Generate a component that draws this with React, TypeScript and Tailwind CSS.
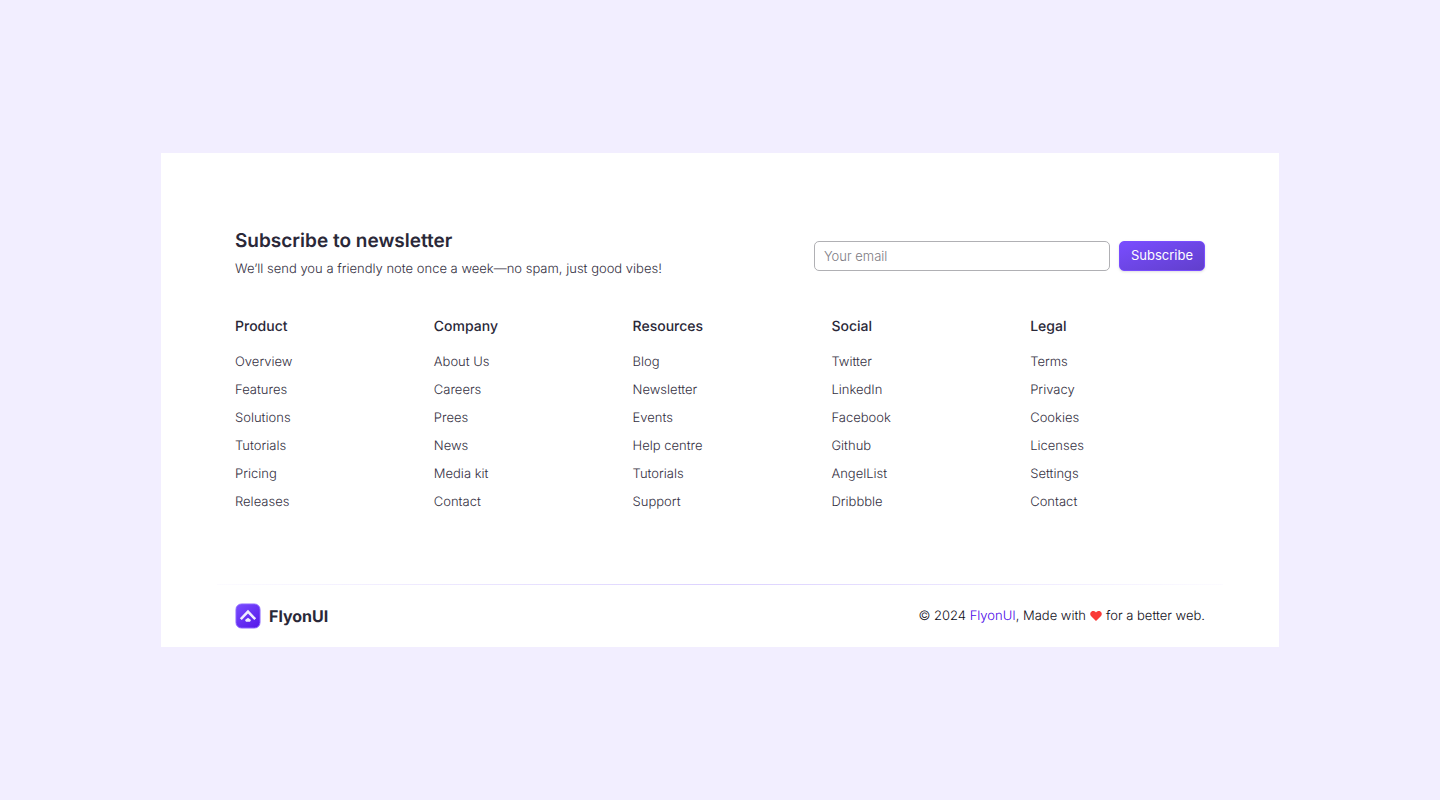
const columns = [
  { title: 'Product', links: ['Overview', 'Features', 'Solutions', 'Tutorials', 'Pricing', 'Releases'] },
  { title: 'Company', links: ['About Us', 'Careers', 'Prees', 'News', 'Media kit', 'Contact'] },
  { title: 'Resources', links: ['Blog', 'Newsletter', 'Events', 'Help centre', 'Tutorials', 'Support'] },
  { title: 'Social', links: ['Twitter', 'LinkedIn', 'Facebook', 'Github', 'AngelList', 'Dribbble'] },
  { title: 'Legal', links: ['Terms', 'Privacy', 'Cookies', 'Licenses', 'Settings', 'Contact'] },
];

function Logo() {
  return (
    <svg className="size-[26px]" viewBox="0 0 26 26" fill="none" aria-hidden="true">
      <defs>
        <linearGradient id="logo-fill" x1="3" y1="0" x2="23" y2="26" gradientUnits="userSpaceOnUse">
          <stop stopColor="#794dff" />
          <stop offset="1" stopColor="#5516e8" />
        </linearGradient>
      </defs>
      <rect x="1" y="1" width="24" height="24" rx="5.500" fill="url(#logo-fill)" stroke="#8a63ff" />
      <path d="M5.800 16.200 13 8.600l7.200 7.600" stroke="#f1edff" strokeWidth="2.600" />
      <path d="M10 17 13 14.800l3 2.200-1 1.700h-4z" fill="#f1edff" />
    </svg>
  );
}

function Heart() {
  return (
    <svg className="mx-1 inline size-3 align-[-2px]" viewBox="0 0 12 12" fill="#fa3a38" role="img" aria-label="love">
      <path d="M6 11 1.200 6.300C-.3 4.700 0 2.400 1.600 1.400 3.100.5 5 .9 6 2.400 7 .9 8.900.5 10.400 1.400 12 2.400 12.300 4.700 10.800 6.300Z" />
    </svg>
  );
}

export default function App() {
  return (
    <div className="flex min-h-screen items-center justify-center bg-[#f2eeff] font-['Inter',sans-serif] text-[#2a2838] [text-rendering:geometricPrecision]">
      <footer className="w-full max-w-[1118px] bg-white">
        <div className="px-[74px] pt-[74px] pb-[72px]">
          <div className="flex items-center justify-between gap-8">
            <div>
              <h2 className="text-[19px] leading-7 font-semibold">Subscribe to newsletter</h2>
              <p className="text-[13px] leading-7 font-light text-[#34303f]">
                We’ll send you a friendly note once a week—no spam, just good vibes!
              </p>
            </div>
            <form className="flex gap-[9px] pt-0.5" onSubmit={(e) => e.preventDefault()}>
              <input
                type="email"
                aria-label="Your email"
                placeholder="Your email"
                className="h-[30px] w-[296px] rounded-[5px] border border-[#b0b0b4] px-[9px] text-[13px] font-light placeholder:text-[#7d7b83]"
              />
              <button className="h-[30px] rounded-[5px] border border-[#794dff] bg-linear-to-br from-[#794dff] to-[#613fcc] px-[11px] text-[13px] text-white shadow-sm">
                Subscribe
              </button>
            </form>
          </div>
          <nav className="mt-[33px] grid grid-cols-5 gap-6">
            {columns.map((column) => (
              <section key={column.title}>
                <h3 className="text-sm leading-[22px] font-medium">{column.title}</h3>
                <ul className="mt-[14px] flex flex-col gap-2">
                  {column.links.map((link) => (
                    <li key={link} className="text-[13px] leading-5 font-light text-[#34303f]">
                      <a href="#">{link}</a>
                    </li>
                  ))}
                </ul>
              </section>
            ))}
          </nav>
        </div>
        <div className="mx-14 h-px bg-linear-to-r from-[#fcfbff] via-[#dcd2ff] to-[#fcfbff]" />
        <div className="flex items-center justify-between px-[74px] py-[18px]">
          <a href="#" className="flex items-center gap-2 text-base leading-6 font-bold">
            <Logo />
            FlyonUI
          </a>
          <p className="text-[13px] leading-6 font-light text-[#0f0d18]">
            © 2024 <a href="#" className="text-[#4a08e8]">FlyonUI</a>, Made with
            <Heart />
            for a better web.
          </p>
        </div>
      </footer>
    </div>
  );
}
